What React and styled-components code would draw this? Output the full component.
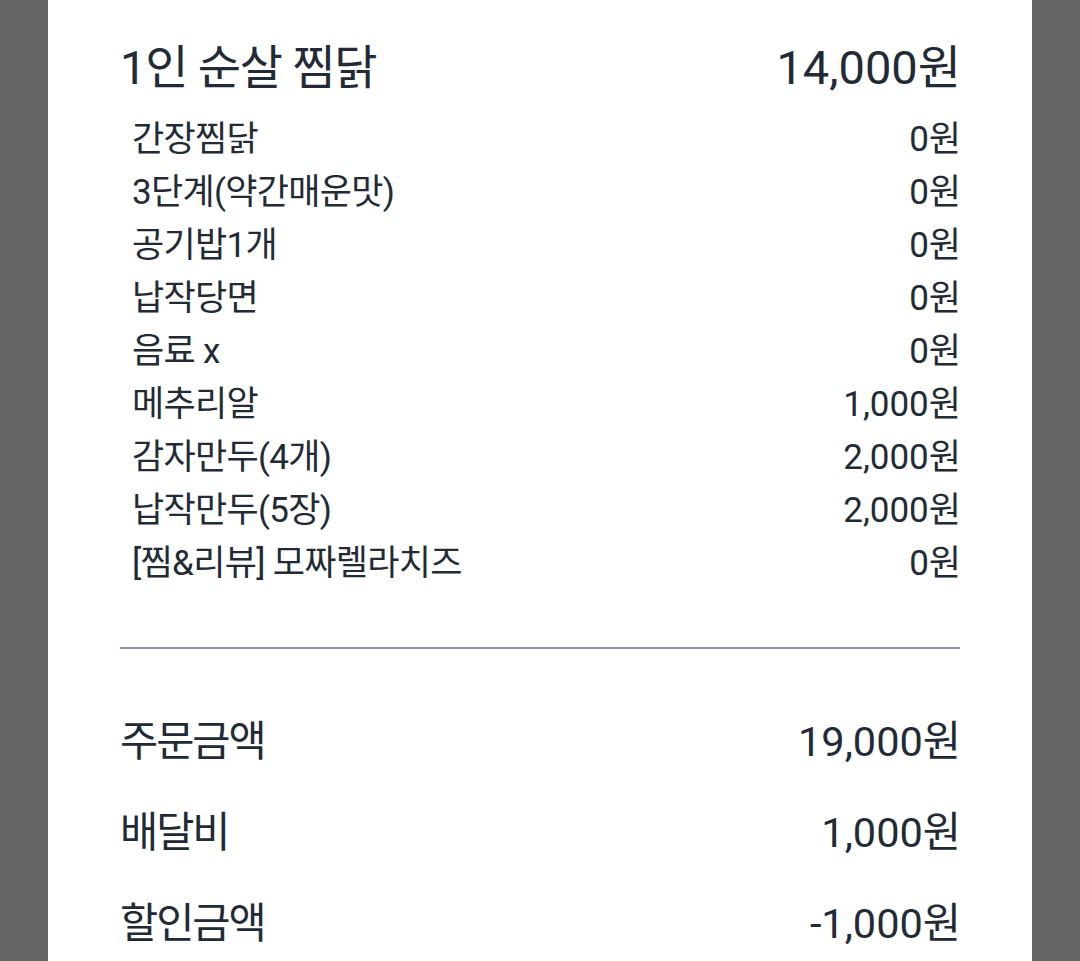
import React from "react";
import styled, { createGlobalStyle } from "styled-components";

const GlobalStyle = createGlobalStyle`
  html, body {
    margin: 0;
    padding: 0;
    background: #666666;
  }
  body {
    font-family: Roboto, "Noto Sans CJK KR", "Noto Sans", sans-serif;
    color: #222b35;
  }
`;

const Panel = styled.div`
  width: 984px;
  min-height: 961px;
  margin: 0 auto;
  background: #ffffff;
  box-sizing: border-box;
  padding: 40px 71px 0 72px;
`;

const Row = styled.div`
  display: flex;
  justify-content: space-between;
  align-items: center;
  white-space: nowrap;
`;

const TitleRow = styled(Row)`
  height: 56px;
  font-size: 47px;
  line-height: 56px;
`;

const OptionList = styled.div`
  display: flex;
  flex-direction: column;
  margin-top: 17px;
  padding-left: 12px;
`;

const OptionRow = styled(Row)`
  height: 53px;
  font-size: 35px;
  line-height: 53px;
`;

const Label = styled.span`
  letter-spacing: ${(p) => p.$tight}px;
`;

const Amount = styled.span``;

const Divider = styled.hr`
  border: none;
  height: 2px;
  background: #8e989f;
  margin: 57px 1px 47px 0;
`;

const SummaryRow = styled(Row)`
  height: 91px;
  font-size: 41.5px;
  line-height: 91px;
`;

const options = [
  ["간장찜닭", "0원"],
  ["3단계(약간매운맛)", "0원"],
  ["공기밥1개", "0원"],
  ["납작당면", "0원"],
  ["음료 x", "0원"],
  ["메추리알", "1,000원"],
  ["감자만두(4개)", "2,000원"],
  ["납작만두(5장)", "2,000원"],
  ["[찜&리뷰] 모짜렐라치즈", "0원"],
];

const summary = [
  ["주문금액", "19,000원"],
  ["배달비", "1,000원"],
  ["할인금액", "-1,000원"],
];

const App = () => {
  return (
    <>
      <GlobalStyle />
      <Panel>
        <TitleRow>
          <Label $tight={-1.2}>1인 순살 찜닭</Label>
          <Amount>14,000원</Amount>
        </TitleRow>
        <OptionList>
          {options.map(([name, price]) => (
            <OptionRow key={name}>
              <Label $tight={-0.7}>{name}</Label>
              <Amount>{price}</Amount>
            </OptionRow>
          ))}
        </OptionList>
        <Divider />
        {summary.map(([label, value]) => (
          <SummaryRow key={label}>
            <Label $tight={-2}>{label}</Label>
            <Amount>{value}</Amount>
          </SummaryRow>
        ))}
      </Panel>
    </>
  );
};

export default App;
